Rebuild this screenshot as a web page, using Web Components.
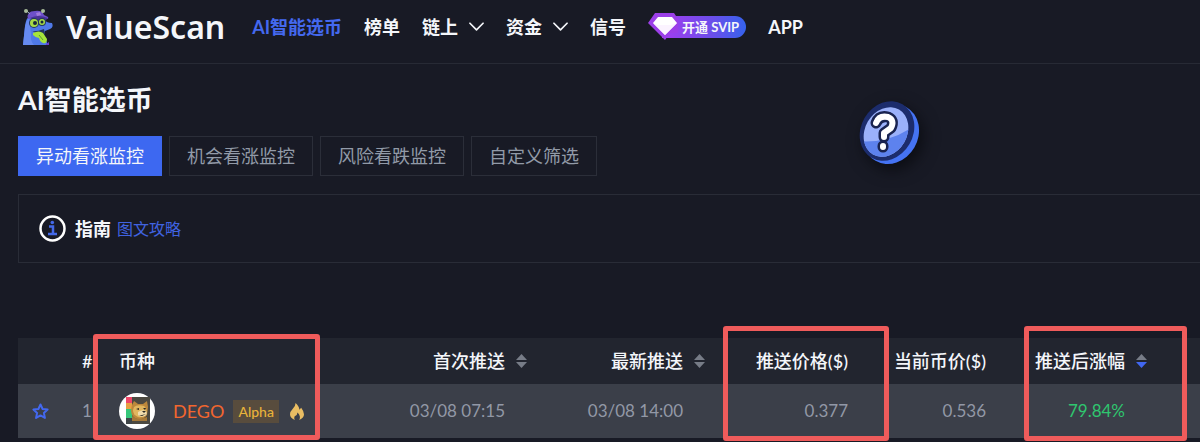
<!DOCTYPE html>
<html lang="zh-CN">
<head>
<meta charset="utf-8">
<meta name="viewport" content="width=device-width, initial-scale=1">
<title>ValueScan</title>
<style>
  body {
    margin: 0;
    background: #181a25;
    color: #f4f6fa;
    font-family: Lato, "Noto Sans CJK SC", sans-serif;
    font-size: 18px;
    line-height: 24px;
    overflow-x: hidden;
  }
</style>
</head>
<body>
<vs-app></vs-app>

<script>
  /* =========================
     HELPERS
  ========================= */
  class VsElement extends HTMLElement {
    constructor() {
      super();
      this.attachShadow({ mode: "open" });
      this.render();
    }

    render() {
      this.shadowRoot.innerHTML = `
      <style>
        * { box-sizing: border-box; }
        button { font: inherit; color: inherit; background: none; border: 0; padding: 0; cursor: pointer; }
        a { color: inherit; text-decoration: none; }
        svg { display: block; }
        ${this.styles()}
      </style>
      ${this.markup()}`;
    }

    styles() { return ""; }
    markup() { return ""; }
  }

  /* =========================
     LOGO
  ========================= */
  class VsLogo extends VsElement {
    styles() {
      return `
        :host { display: block; flex: none; }
        a { display: flex; align-items: center; gap: 12px; }
        span { font-family: "Noto Sans", sans-serif; font-size: 32px; line-height: 40px; font-weight: 600; }
      `;
    }

    markup() {
      return `
        <a href="#">
          <svg width="32" height="36" viewBox="0 0 32 36" aria-hidden="true">
            <path d="M1 36 3 17Q4 9 7 8L22 10Q24 14 30 14Q32 18 28 20L23 22 22 26 26 36Z" fill="#4f79e8"/>
            <path d="M1 36 3 18Q4 12 7 9L9 25Q8 32 12 36Z" fill="#668af0"/>
            <path d="M6 10Q4 2 13 2Q20 1 22 6L26 8Q27 10 24 10L12 9Z" fill="#6d50c9"/>
            <path d="M8 9Q16 5 26 9L24 11 12 11Z" fill="#493294"/>
            <path d="M4 1 8 5M22 1 20 4" stroke="#91a5b2" stroke-width="1"/>
            <circle cx="4" cy="2" r="2" fill="#a8bb99"/><circle cx="21" cy="2" r="2" fill="#a8bb99"/>
            <path d="m14 4 4-1 1 3-4 1z" fill="#a07bd9"/>
            <circle cx="12" cy="14" r="5" fill="#23395f"/><circle cx="20" cy="13" r="4" fill="#23395f"/>
            <circle cx="12" cy="14" r="4" fill="#a7db46"/><circle cx="20" cy="13" r="3" fill="#a7db46"/>
            <circle cx="13" cy="14" r="2" fill="#17263b"/><circle cx="20" cy="13" r="1.5" fill="#17263b"/>
            <path d="M8 21Q12 24 22 20L23 25Q20 27 16 25Z" fill="#20345b"/>
            <path d="M11 24Q17 21 21 24L25 30Q25 35 21 34Q18 33 17 29Q14 29 11 26Z" fill="#a5e53b"/>
            <path d="m17 26 4 5" stroke="#579c36" fill="none"/>
            <path d="m24 35 3-2v3h-3z" fill="#6a3dd1"/>
          </svg>
          <span>ValueScan</span>
        </a>`;
    }
  }

  /* =========================
     NAV ITEM
  ========================= */
  class VsNavItem extends VsElement {
    styles() {
      return `
        :host { display: block; flex: none; font-weight: 700; }
        :host([active]) { color: #4469ef; }
        a { display: flex; align-items: center; gap: 11px; white-space: nowrap; }
        svg { display: none; }
        :host([menu]) svg { display: block; }
      `;
    }

    markup() {
      return `
        <a href="#">
          <slot></slot>
          <svg width="15" height="10" viewBox="0 0 16 10" fill="none" stroke="currentColor" stroke-width="1.800" stroke-linecap="round" stroke-linejoin="round" aria-hidden="true"><path d="m1 1 7 7 7-7"/></svg>
        </a>`;
    }
  }

  /* =========================
     SVIP BADGE
  ========================= */
  class VsSvip extends VsElement {
    styles() {
      return `
        :host { display: block; flex: none; }
        a { display: flex; align-items: center; }
        svg { margin-right: -16px; position: relative; }
        span {
          height: 22px;
          padding: 0 7px 0 20px;
          border-radius: 0 11px 11px 0;
          background: linear-gradient(90deg, #a33df0, #6b4eea 60%, #3563ed);
          font-size: 13px;
          line-height: 22px;
          font-weight: 700;
          white-space: nowrap;
        }
      `;
    }

    markup() {
      return `
        <a href="#">
          <svg width="30" height="28" viewBox="0 0 30 28" aria-hidden="true">
            <path d="M7 0H26L30 6V20H22L17 27 0 10Z" fill="#9b3fe8"/>
            <path d="M10 4H24L29 10 17 22 5 10Z" fill="#fff"/>
            <path d="M5 10 17 22 29 10 23 12H10Z" fill="#fbf3ff"/>
          </svg>
          <span>开通 SVIP</span>
        </a>`;
    }
  }

  /* =========================
     HEADER
  ========================= */
  class VsHeader extends VsElement {
    styles() {
      return `
        :host { display: block; border-bottom: 1px solid #272a35; }
        header { display: flex; align-items: center; gap: 27px; height: 63px; padding: 0 22px 9px; }
        nav { display: flex; align-items: center; gap: 22px; }
      `;
    }

    markup() {
      return `
        <header>
          <vs-logo></vs-logo>
          <nav>
            <vs-nav-item active>AI智能选币</vs-nav-item>
            <vs-nav-item>榜单</vs-nav-item>
            <vs-nav-item menu>链上</vs-nav-item>
            <vs-nav-item menu>资金</vs-nav-item>
            <vs-nav-item>信号</vs-nav-item>
            <vs-svip></vs-svip>
            <vs-nav-item>APP</vs-nav-item>
          </nav>
        </header>`;
    }
  }

  /* =========================
     TAB
  ========================= */
  class VsTab extends VsElement {
    styles() {
      return `
        :host { display: block; color: #929aa8; }
        button { height: 40px; padding: 0 17px; border: 1px solid #2b2e39; white-space: nowrap; }
        :host([active]) { color: #f4f6fa; }
        :host([active]) button { background: #3d68f1; border-color: #3d68f1; }
      `;
    }

    markup() {
      return `<button type="button"><slot></slot></button>`;
    }
  }

  /* =========================
     GUIDE BAR
  ========================= */
  class VsGuide extends VsElement {
    styles() {
      return `
        :host {
          display: flex;
          align-items: center;
          height: 69px;
          padding: 0 20px;
          border: 1px solid #292c37;
          border-right: 0;
        }
        strong { margin: 0 6px 0 9px; font-weight: 600; }
        a { color: #4063e0; font-size: 16px; }
      `;
    }

    markup() {
      return `
        <svg width="27" height="27" viewBox="0 0 27 27" fill="none" aria-hidden="true">
          <circle cx="13.5" cy="13.5" r="12" stroke="#fff" stroke-width="2.5"/>
          <path d="M10 11.5h4V19M9 19h9" stroke="#4469e8" stroke-width="2.500"/>
          <circle cx="13.300" cy="7.500" r="1.800" fill="#4469e8"/>
        </svg>
        <strong>指南</strong>
        <a href="#">图文攻略</a>`;
    }
  }

  /* =========================
     SORT LABEL
  ========================= */
  class VsSort extends VsElement {
    styles() {
      return `
        :host { display: inline-block; --down: #777c87; }
        :host([order="desc"]) { --down: #4167f1; }
        button { display: flex; align-items: center; gap: 11px; white-space: nowrap; }
      `;
    }

    markup() {
      return `
        <button type="button">
          <slot></slot>
          <svg width="11" height="14" viewBox="0 0 11 14" aria-hidden="true">
            <path d="M5.500 0 11 6H0Z" fill="#777c87"/>
            <path d="M0 8h11l-5.500 6Z" fill="var(--down)"/>
          </svg>
        </button>`;
    }
  }

  /* =========================
     COIN CELL
  ========================= */
  class VsCoin extends VsElement {
    styles() {
      return `
        :host { display: flex; align-items: center; color: #f2662f; font-size: 18px; }
        .name { margin: 0 9px 0 18px; }
        .tag {
          height: 23px;
          padding: 0 5px;
          background: #584c3d;
          color: #e8b33a;
          font-size: 14px;
          line-height: 23px;
          font-weight: 500;
        }
        .fire { margin-left: 11px; }
      `;
    }

    markup() {
      return `
        <svg width="36" height="36" viewBox="0 0 36 36" aria-hidden="true">
          <circle cx="18" cy="18" r="18" fill="#fff"/>
          <path d="M7 4h24v27H7Z" fill="#4c4941"/>
          <path d="M7 4h6v6H7Z" fill="#ef4668"/><path d="M7 10h6v6H7Z" fill="#e7a044"/>
          <path d="M7 16h6v9H7Z" fill="#36c77a"/><path d="M7 25h6v6H7Z" fill="#3f4548"/>
          <path d="M13 12 15 8 19 11H24L28 8 29 14 28 22Q25 27 18 26 12 24 12 17Z" fill="#bd883b"/>
          <path d="M15 14Q18 11 25 13Q29 16 27 21Q24 25 19 24Q14 22 14 17Z" fill="#e1b65e"/>
          <path d="M19 19Q23 16 27 18Q29 21 26 23Q22 25 19 22Z" fill="#f0dcae"/>
          <path d="m17 16 3-1v2zm7-1 3 0-1 2zM23 18h4l-2 2zM20 22l3 1 4-2-4 1z" fill="#2b2822"/>
          <path d="M13 23Q18 28 28 24V28H13Z" fill="#a77a39"/>
        </svg>
        <span class="name"><slot></slot></span>
        <span class="tag">Alpha</span>
        <svg class="fire" width="14" height="17" viewBox="0 0 15 18" aria-hidden="true">
          <path d="M6 0Q10 4 10 7L12 5Q15 9 15 12Q15 16 10 18Q12 14 8 10Q8 13 5 14Q4 16 5 18Q0 16 0 12Q0 9 3 6Q6 3 6 0Z" fill="#e9bd63"/>
        </svg>`;
    }
  }

  /* =========================
     SIGNAL TABLE
  ========================= */
  class VsSignalTable extends VsElement {
    styles() {
      return `
        :host { display: block; position: relative; }
        table { width: 100%; border-collapse: collapse; table-layout: fixed; }
        th { height: 46px; padding: 0 8px; background: #22252f; font-weight: 500; text-align: right; white-space: nowrap; }
        td { height: 54px; padding: 0 8px; background: #3b3f49; color: #9298a6; font-size: 17px; text-align: right; white-space: nowrap; }
        th.left, td.left { text-align: left; padding-left: 16px; }
        th.rank, td.rank { text-align: left; padding: 0 0 0 20px; }
        td.sorted { padding-right: 30px; }
        td.up { color: #2fc66f; }
        td.star { padding-left: 14px; }
        .star button { display: block; }
        col.c-star { width: 44px; }
        col.c-rank { width: 41px; }
        col.c-time { width: 178px; }
        col.c-price { width: 143px; }
        col.c-now { width: 138px; }
        col.c-gain { width: 161px; }
        col.c-end { width: 45px; }
        ::slotted(vs-mark) { position: absolute; }
      `;
    }

    markup() {
      return `
        <table>
          <colgroup>
            <col class="c-star"><col class="c-rank"><col>
            <col class="c-time"><col class="c-time">
            <col class="c-price"><col class="c-now"><col class="c-gain"><col class="c-end">
          </colgroup>
          <thead>
            <tr>
              <th></th>
              <th class="rank">#</th>
              <th class="left">币种</th>
              <th><vs-sort>首次推送</vs-sort></th>
              <th><vs-sort>最新推送</vs-sort></th>
              <th>推送价格($)</th>
              <th>当前币价($)</th>
              <th><vs-sort order="desc">推送后涨幅</vs-sort></th>
              <th></th>
            </tr>
          </thead>
          <tbody>
            <tr>
              <td class="star">
                <button type="button" aria-label="收藏">
                  <svg width="17" height="17" viewBox="0 0 17 17" fill="none" stroke="#4368ef" stroke-width="2" stroke-linejoin="round"><path d="m8.500 1.500 2.100 4.500 5 .6-3.700 3.300 1 5-4.400-2.500-4.400 2.500 1-5L1.400 6.600l5-.6Z"/></svg>
                </button>
              </td>
              <td class="rank">1</td>
              <td class="left"><vs-coin>DEGO</vs-coin></td>
              <td class="sorted">03/08 07:15</td>
              <td class="sorted">03/08 14:00</td>
              <td>0.377</td>
              <td>0.536</td>
              <td class="sorted up">79.84%</td>
              <td></td>
            </tr>
          </tbody>
        </table>
        <slot></slot>`;
    }
  }

  /* Red frame laid over a group of cells */
  class VsMark extends VsElement {
    styles() {
      return `
        :host {
          display: block;
          box-sizing: border-box;
          top: -12px;
          bottom: -3px;
          border: 5px solid #ef5b5b;
          border-radius: 3px;
          pointer-events: none;
        }
        :host([for="coin"]) { left: 75px; width: 227px; top: -4px; bottom: -2px; }
        :host([for="price"]) { right: 311px; width: 166px; }
        :host([for="gain"]) { right: 13px; width: 163px; }
      `;
    }
  }

  /* =========================
     HELP BUTTON
  ========================= */
  class VsHelp extends VsElement {
    styles() {
      return `
        :host { display: block; position: absolute; top: 100px; right: 279px; }
        svg { filter: drop-shadow(4px 6px 8px #0b0c12); }
      `;
    }

    markup() {
      return `
        <button type="button" aria-label="帮助">
          <svg width="64" height="66" viewBox="0 0 64 66">
            <defs>
              <clipPath id="face"><ellipse cx="29" cy="32" rx="21" ry="26" transform="rotate(30 29 32)"/></clipPath>
            </defs>
            <ellipse cx="34" cy="34" rx="27" ry="31" transform="rotate(30 34 34)" fill="#4573f3"/>
            <ellipse cx="30" cy="31" rx="26" ry="31" transform="rotate(30 30 31)" fill="#1c2c6c"/>
            <g clip-path="url(#face)">
              <path d="M0 0h64v66H0Z" fill="#9bb1fa"/>
              <path d="M0 41Q33 44 58 25V66H0Z" fill="#5d82ee"/>
            </g>
            <g fill="none" stroke-linecap="round" stroke-linejoin="round">
              <path d="M19 23Q22 15 31 17 38 20 34 28L27 33V37M26 46v1" stroke="#192350" stroke-width="11"/>
              <path d="M19 23Q22 15 31 17 38 20 34 28L27 33V37M26 46v1" stroke="#fff" stroke-width="6"/>
            </g>
          </svg>
        </button>`;
    }
  }

  /* =========================
     PAGE
  ========================= */
  class VsApp extends VsElement {
    styles() {
      return `
        :host { display: block; position: relative; }
        main { padding: 18px 0 4px 18px; }
        h1 { margin: 0 0 18px; font-size: 27px; line-height: 36px; font-weight: 700; }
        .tabs { display: flex; gap: 7px; margin-bottom: 18px; }
        vs-signal-table { margin-top: 75px; }
      `;
    }

    markup() {
      return `
        <vs-header></vs-header>
        <main>
          <h1>AI智能选币</h1>
          <div class="tabs">
            <vs-tab active>异动看涨监控</vs-tab>
            <vs-tab>机会看涨监控</vs-tab>
            <vs-tab>风险看跌监控</vs-tab>
            <vs-tab>自定义筛选</vs-tab>
          </div>
          <vs-guide></vs-guide>
          <vs-signal-table>
            <vs-mark for="coin"></vs-mark>
            <vs-mark for="price"></vs-mark>
            <vs-mark for="gain"></vs-mark>
          </vs-signal-table>
        </main>
        <vs-help></vs-help>`;
    }
  }

  customElements.define("vs-logo", VsLogo);
  customElements.define("vs-nav-item", VsNavItem);
  customElements.define("vs-svip", VsSvip);
  customElements.define("vs-header", VsHeader);
  customElements.define("vs-tab", VsTab);
  customElements.define("vs-guide", VsGuide);
  customElements.define("vs-sort", VsSort);
  customElements.define("vs-coin", VsCoin);
  customElements.define("vs-mark", VsMark);
  customElements.define("vs-signal-table", VsSignalTable);
  customElements.define("vs-help", VsHelp);
  customElements.define("vs-app", VsApp);
</script>
</body>
</html>
